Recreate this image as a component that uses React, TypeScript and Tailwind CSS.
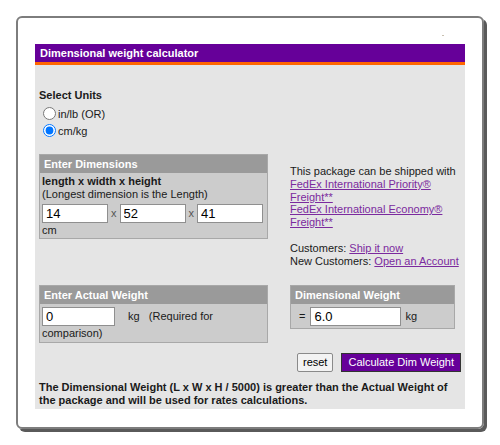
import { useState } from 'react';

function BoxHeader({ title }: { title: string }) {
  return (
    <div className="h-[18px] bg-[#9a9a9a] px-[4px] text-[11px] font-bold leading-[18px] text-white">
      {title}
    </div>
  );
}

function TextInput({ value, width }: { value: string; width: string }) {
  return (
    <input
      readOnly
      value={value}
      className={`${width} h-[19px] border border-[#8f8f8f] bg-white px-[3px] text-[13px] leading-[17px] text-black outline-none`}
    />
  );
}

export default function App() {
  const [units, setUnits] = useState('cm');

  return (
    <div className="h-[445px] w-[500px] bg-white pl-[16px] pt-[16px] font-['Liberation_Sans',Arial,sans-serif] text-[11px] text-[#1a1a1a]">
      <div className="relative h-[413px] w-[468px] rounded-[6px] border-2 border-[#7d7d7d] px-[17px] pt-[26px] shadow-[3px_3px_0_#5a5a5a]">
        {/* stray dot top right */}
        <div className="absolute right-[38px] top-[17px] h-[1px] w-[2px] bg-[#c8c0b0]" />

        <div className="h-[365px] w-[430px] bg-[#e5e5e5]">
          {/* title bar */}
          <div className="h-[18px] bg-[#660099] px-[5px] text-[11px] font-bold leading-[18px] text-white">
            Dimensional weight calculator
          </div>
          <div className="h-[3px] bg-[#ff6600]" />

          <div className="px-[4px]">
            {/* units */}
            <div className="pt-[23px] leading-[14px]">
              <div className="font-bold">Select Units</div>
              <label className="mt-[3px] flex h-[17px] items-center gap-[2px]">
                <input
                  type="radio"
                  name="units"
                  checked={units === 'in'}
                  onChange={() => setUnits('in')}
                  className="ml-[4px] h-[13px] w-[13px]"
                />
                <span>in/lb (OR)</span>
              </label>
              <label className="flex h-[17px] items-center gap-[2px]">
                <input
                  type="radio"
                  name="units"
                  checked={units === 'cm'}
                  onChange={() => setUnits('cm')}
                  className="ml-[4px] h-[13px] w-[13px]"
                />
                <span>cm/kg</span>
              </label>
            </div>

            {/* dimensions row */}
            <div className="mt-[15px] flex gap-[22px]">
              <div className="w-[229px] self-start border border-[#a8a8a8] bg-[#cccccc]">
                <BoxHeader title="Enter Dimensions" />
                <div className="px-[2px] pb-[1px] pt-[2px] leading-[13px]">
                  <div className="font-bold">length x width x height</div>
                  <div>(Longest dimension is the Length)</div>
                  <div className="mt-[3px] flex items-center text-[#555]">
                    <TextInput value="14" width="w-[66px]" />
                    <span className="mx-[3px]">x</span>
                    <TextInput value="52" width="w-[66px]" />
                    <span className="mx-[3px]">x</span>
                    <TextInput value="41" width="w-[66px]" />
                  </div>
                  <div className="pt-[1px]">cm</div>
                </div>
              </div>

              <div className="pt-[11px] leading-[12.8px]">
                <div>This package can be shipped with</div>
                <a href="#" className="text-[#7b2a9e] underline">
                  FedEx International Priority®
                  <br />
                  Freight**
                </a>
                <br />
                <a href="#" className="text-[#7b2a9e] underline">
                  FedEx International Economy®
                  <br />
                  Freight**
                </a>
                <div className="mt-[13px]">
                  Customers:{' '}
                  <a href="#" className="text-[#7b2a9e] underline">
                    Ship it now
                  </a>
                </div>
                <div>
                  New Customers:{' '}
                  <a href="#" className="text-[#7b2a9e] underline">
                    Open an Account
                  </a>
                </div>
              </div>
            </div>

            {/* weight row */}
            <div className="mt-[17px] flex items-start gap-[22px]">
              <div className="w-[229px] border border-[#a8a8a8] bg-[#cccccc]">
                <BoxHeader title="Enter Actual Weight" />
                <div className="px-[2px] pt-[3px] leading-[13px]">
                  <div className="flex items-center">
                    <TextInput value="0" width="w-[73px]" />
                    <span className="ml-[13px]">kg&nbsp;&nbsp;&nbsp;(Required for</span>
                  </div>
                  <div className="pb-[2px] pt-[1px]">comparison)</div>
                </div>
              </div>

              <div className="w-[165px] border border-[#a8a8a8] bg-[#cccccc]">
                <BoxHeader title="Dimensional Weight" />
                <div className="flex items-center px-[8px] pb-[2px] pt-[3px]">
                  <span className="mr-[5px]">=</span>
                  <TextInput value="6.0" width="w-[91px]" />
                  <span className="ml-[4px]">kg</span>
                </div>
              </div>
            </div>

            {/* buttons */}
            <div className="mt-[10px] flex justify-end gap-[8px]">
              <button className="h-[19px] rounded-[2px] border border-[#8a8a8a] bg-[#f3f3f3] px-[5px] text-[11px] leading-[17px] text-black">
                reset
              </button>
              <button className="h-[19px] border border-[#333] bg-[#660099] px-[6px] text-[11px] leading-[17px] text-white">
                Calculate Dim Weight
              </button>
            </div>

            {/* result text */}
            <div className="mt-[9px] font-bold leading-[13px]">
              The Dimensional Weight (L x W x H / 5000) is greater than the Actual Weight of
              the package and will be used for rates calculations.
            </div>
          </div>
        </div>
      </div>
    </div>
  );
}
